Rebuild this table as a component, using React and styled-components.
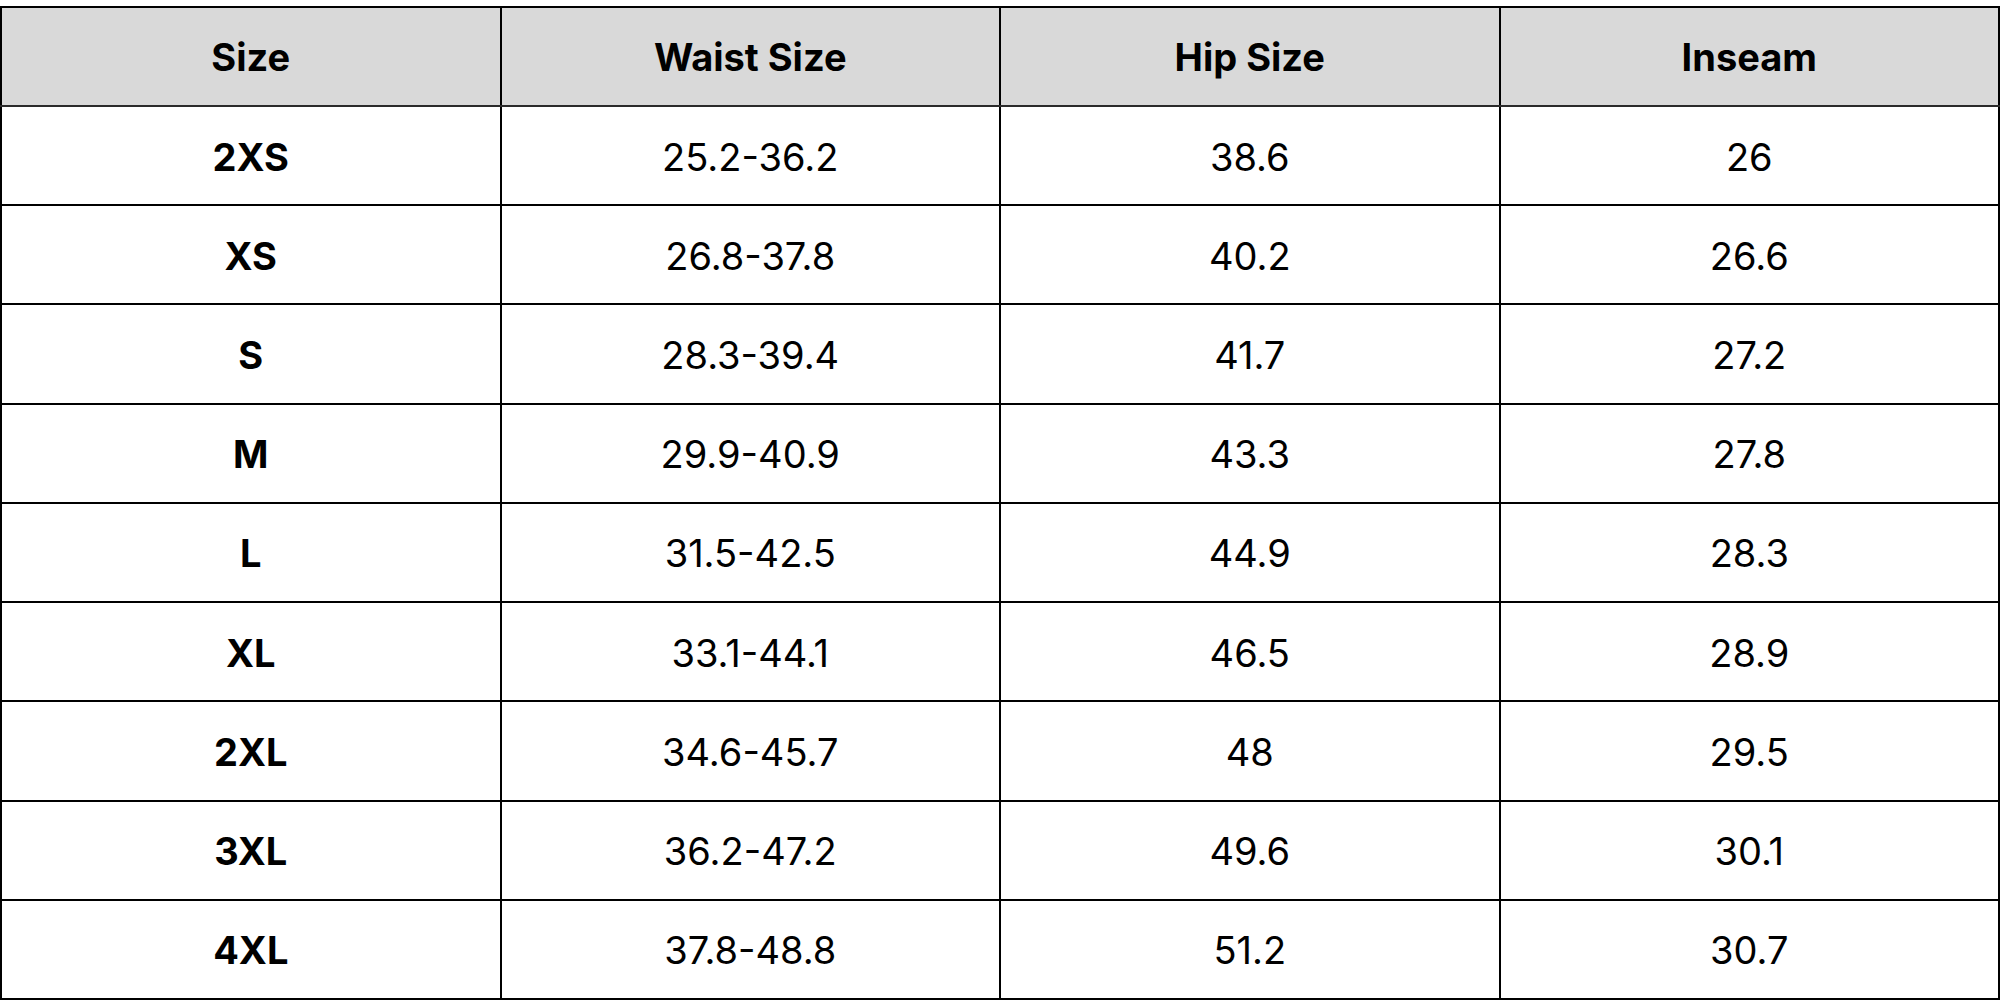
import styled, { createGlobalStyle } from "styled-components";

const GlobalStyle = createGlobalStyle`
  html, body {
    margin: 0;
    padding: 0;
    background: #ffffff;
  }
  body {
    font-family: Inter, "Liberation Sans", sans-serif;
    color: #000;
  }
`;

const rows = [
  ["2XS", "25.2-36.2", "38.6", "26"],
  ["XS", "26.8-37.8", "40.2", "26.6"],
  ["S", "28.3-39.4", "41.7", "27.2"],
  ["M", "29.9-40.9", "43.3", "27.8"],
  ["L", "31.5-42.5", "44.9", "28.3"],
  ["XL", "33.1-44.1", "46.5", "28.9"],
  ["2XL", "34.6-45.7", "48", "29.5"],
  ["3XL", "36.2-47.2", "49.6", "30.1"],
  ["4XL", "37.8-48.8", "51.2", "30.7"],
];

const Page = styled.div`
  padding-top: 6px;
  width: 2000px;
  height: 994px;
`;

const Table = styled.table`
  width: 2000px;
  height: 994px;
  border-collapse: collapse;
  table-layout: fixed;
  border: 2px solid #000;
`;

const HeadCell = styled.th`
  background: #d9d9d9;
  border: 2px solid #000;
  border-bottom-color: #2a2a2a;
  font-weight: 700;
  font-size: 38px;
  text-align: center;
  vertical-align: middle;
  height: 97px;
  padding: 0;
`;

const Cell = styled.td`
  border: 2px solid #000;
  font-weight: ${(props) => (props.bold ? 700 : 400)};
  font-size: 38px;
  text-align: center;
  vertical-align: middle;
  height: 95px;
  padding: 2px 0 0;
`;

export default function App() {
  return (
    <Page>
      <GlobalStyle />
      <Table>
        <thead>
          <tr>
            <HeadCell>Size</HeadCell>
            <HeadCell>Waist Size</HeadCell>
            <HeadCell>Hip Size</HeadCell>
            <HeadCell>Inseam</HeadCell>
          </tr>
        </thead>
        <tbody>
          {rows.map((r) => (
            <tr key={r[0]}>
              <Cell bold>{r[0]}</Cell>
              <Cell>{r[1]}</Cell>
              <Cell>{r[2]}</Cell>
              <Cell>{r[3]}</Cell>
            </tr>
          ))}
        </tbody>
      </Table>
    </Page>
  );
}
